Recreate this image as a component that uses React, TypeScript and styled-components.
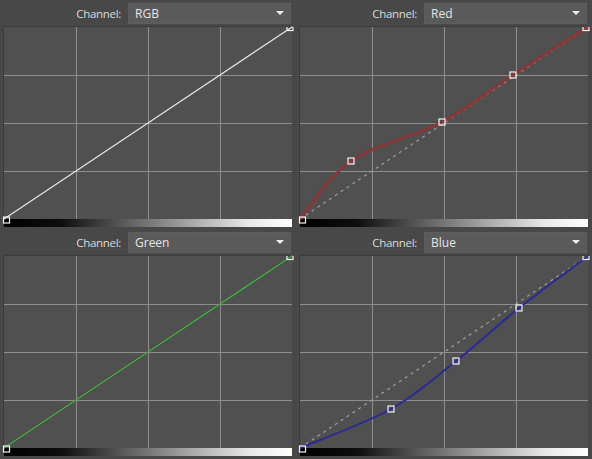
import React from "react";
import styled, { createGlobalStyle } from "styled-components";

const Global = createGlobalStyle`
  html, body { margin: 0; padding: 0; background: #484848; }
  body { width: 592px; height: 459px; overflow: hidden; }
`;

const Grid = styled.div`
  display: grid;
  grid-template-columns: 296px 296px;
  grid-template-rows: 229px 230px;
  width: 592px;
  height: 459px;
  background: #484848;
  font-family: "Open Sans", "Noto Sans", sans-serif;
`;

const Panel = styled.div`
  display: flex;
  flex-direction: column;
  padding: 0 4px;
`;

const Header = styled.div`
  height: 27px;
  display: flex;
  align-items: center;
  justify-content: flex-end;
  gap: 7px;
  padding-bottom: 1px;
  box-sizing: border-box;
`;

const Label = styled.span`
  color: #dcdcdc;
  font-size: 11.5px;
  letter-spacing: -0.3px;
`;

const Select = styled.div`
  width: 163px;
  height: 21px;
  box-sizing: border-box;
  background: #5a5a5a;
  border: 1px solid #5e5e5e;
  display: flex;
  align-items: center;
  justify-content: space-between;
  padding: 0 6px 0 6px;
  color: #e6e6e6;
  font-size: 12px;
  margin-right: 1px;
`;

const Arrow = styled.span`
  width: 0;
  height: 0;
  border-left: 4px solid transparent;
  border-right: 4px solid transparent;
  border-top: 4px solid #f0f0f0;
`;

const Plot = styled.div`
  width: 288px;
  height: 192px;
  background: #505050;
  box-shadow: -1px -1px 0 #3c3c3c;
  position: relative;
  z-index: 1;
`;

const Svg = styled.svg`
  display: block;
  overflow: visible;
`;

const Ramp = styled.div`
  width: 288px;
  height: 8px;
  background: linear-gradient(to right, #000 0%, #0e0e0e 20%, #555 40%, #a8a8a8 65%, #e8e8e8 85%, #fff 100%);
`;

type Pt = [number, number];

function smoothPath(pts: Pt[]): string {
  let d = `M ${pts[0][0]} ${pts[0][1]}`;
  for (let i = 0; i < pts.length - 1; i++) {
    const p0 = pts[i - 1] || pts[i];
    const p1 = pts[i];
    const p2 = pts[i + 1];
    const p3 = pts[i + 2] || p2;
    const c1x = p1[0] + (p2[0] - p0[0]) / 6;
    const c1y = p1[1] + (p2[1] - p0[1]) / 6;
    const c2x = p2[0] - (p3[0] - p1[0]) / 6;
    const c2y = p2[1] - (p3[1] - p1[1]) / 6;
    d += ` C ${c1x} ${c1y} ${c2x} ${c2y} ${p2[0]} ${p2[1]}`;
  }
  return d;
}

type Curve = {
  channel: string;
  color: string;
  width: number;
  opacity: number;
  points: Pt[];
  diagonal: boolean;
};

const curves: Curve[] = [
  { channel: "RGB", color: "#e8e8e8", width: 1.2, opacity: 1, points: [[0, 192], [288, 0]], diagonal: false },
  { channel: "Red", color: "#8c3535", width: 3, opacity: 0.9, points: [[0, 192], [51, 134], [142, 95], [213, 48], [288, 0]], diagonal: true },
  { channel: "Green", color: "#3fa83f", width: 1.5, opacity: 1, points: [[0, 192], [288, 0]], diagonal: false },
  { channel: "Blue", color: "#2a2a96", width: 2, opacity: 1, points: [[0, 192], [91, 153], [156, 105], [219, 52], [288, 0]], diagonal: true },
];

const Handle: React.FC<{ x: number; y: number }> = ({ x, y }) => {
  const cx = Math.min(Math.max(x, 2.5), 286);
  const cy = y >= 192 ? 193 : y <= 0 ? 0.5 : y;
  return <rect x={cx - 3} y={cy - 3} width={6} height={6} fill="none" stroke="#f4f4f4" strokeWidth={1.2} />;
};

const CurvePlot: React.FC<{ c: Curve; id: string }> = ({ c, id }) => (
  <Plot>
    <Svg width={288} height={192} viewBox="0 0 288 192">
      <defs>
        <clipPath id={id}>
          <rect x={-10} y={0} width={300} height={210} />
        </clipPath>
      </defs>
      {[72, 144, 216].map((x) => (
        <line key={"v" + x} x1={x + 0.5} y1={0} x2={x + 0.5} y2={192} stroke="#8e8e8e" strokeWidth={1} />
      ))}
      {[48, 96, 144].map((y) => (
        <line key={"h" + y} x1={0} y1={y + 0.5} x2={288} y2={y + 0.5} stroke="#8e8e8e" strokeWidth={1} />
      ))}
      {c.diagonal && (
        <line x1={0} y1={192} x2={288} y2={0} stroke="#9a9a9a" strokeWidth={1.3} strokeDasharray="3 4" />
      )}
      <path d={smoothPath(c.points)} fill="none" stroke={c.color} strokeWidth={c.width} strokeOpacity={c.opacity} strokeLinecap="round" />
      <g clipPath={`url(#${id})`}>
        {c.points.map(([x, y], i) => (
          <Handle key={i} x={x} y={y} />
        ))}
      </g>
    </Svg>
  </Plot>
);

const ChannelPanel: React.FC<{ c: Curve }> = ({ c }) => (
  <Panel>
    <Header>
      <Label>Channel:</Label>
      <Select>
        <span>{c.channel}</span>
        <Arrow />
      </Select>
    </Header>
    <CurvePlot c={c} id={`clip-${c.channel}`} />
    <Ramp />
  </Panel>
);

export default function App() {
  return (
    <>
      <Global />
      <Grid>
        {curves.map((c) => (
          <ChannelPanel key={c.channel} c={c} />
        ))}
      </Grid>
    </>
  );
}
